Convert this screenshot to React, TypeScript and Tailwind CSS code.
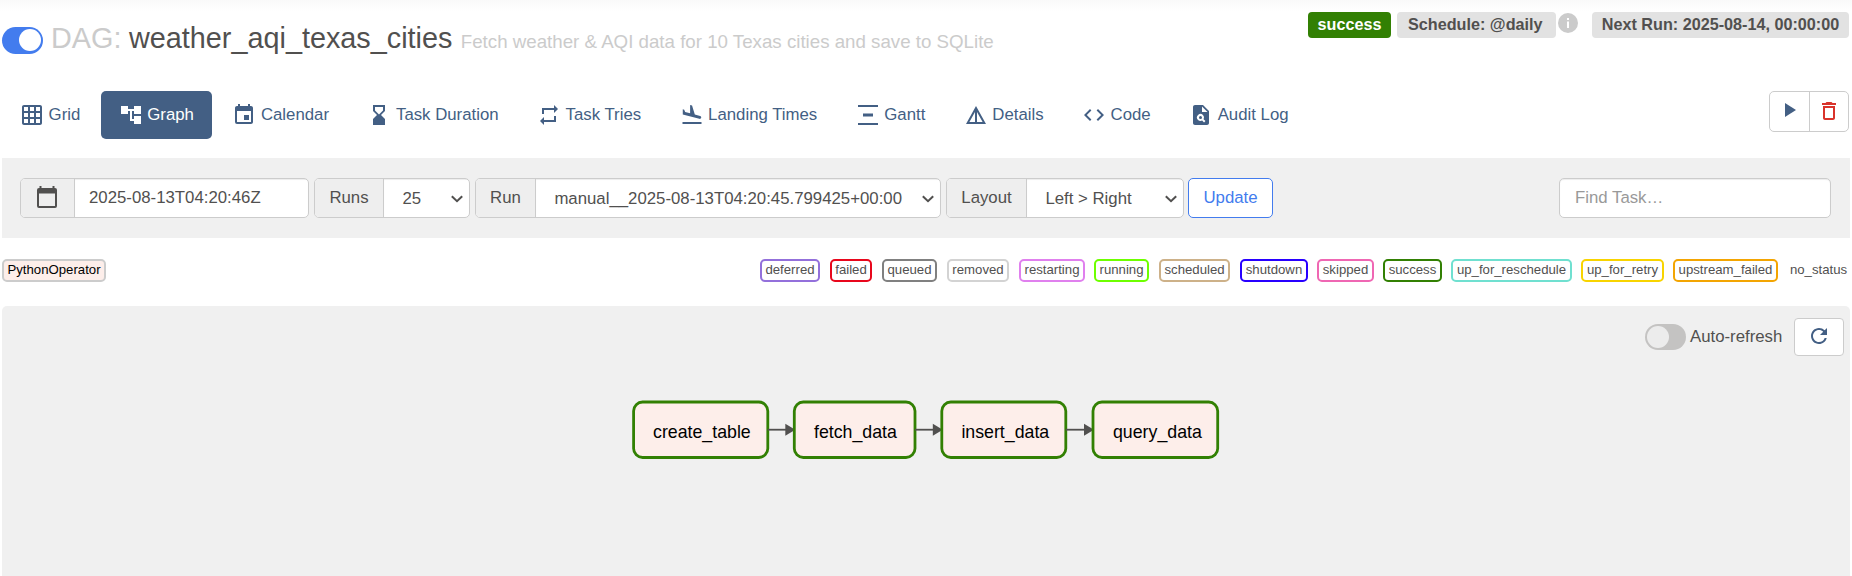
import type { ReactNode } from "react";
import type { IconType } from "react-icons";
import {
  MdAccountTree,
  MdCode,
  MdDeleteOutline,
  MdDetails,
  MdEvent,
  MdFlightLand,
  MdGridOn,
  MdHourglassBottom,
  MdPlagiarism,
  MdPlayArrow,
  MdRefresh,
  MdRepeat,
  MdVerticalDistribute,
} from "react-icons/md";

const tabs: { label: string; icon: IconType; active?: boolean }[] = [
  { label: "Grid", icon: MdGridOn },
  { label: "Graph", icon: MdAccountTree, active: true },
  { label: "Calendar", icon: MdEvent },
  { label: "Task Duration", icon: MdHourglassBottom },
  { label: "Task Tries", icon: MdRepeat },
  { label: "Landing Times", icon: MdFlightLand },
  { label: "Gantt", icon: MdVerticalDistribute },
  { label: "Details", icon: MdDetails },
  { label: "Code", icon: MdCode },
  { label: "Audit Log", icon: MdPlagiarism },
];

const states = [
  { label: "deferred", style: "w-[60px] border-[#9370db]" },
  { label: "failed", style: "w-[42px] border-[#e8071c]" },
  { label: "queued", style: "w-[55px] border-[#808080]" },
  { label: "removed", style: "w-[62px] border-[#d3d3d3]" },
  { label: "restarting", style: "w-[66px] border-[#e080ee]" },
  { label: "running", style: "-ml-px w-[55px] border-[#6eff00]" },
  { label: "scheduled", style: "w-[71px] border-[#cdb189]" },
  { label: "shutdown", style: "w-[68px] border-[#2800ff]" },
  { label: "skipped", style: "-ml-px w-[57px] border-[#ef67b3]" },
  { label: "success", style: "-ml-px w-[59px] border-[#328003]" },
  { label: "up_for_reschedule", style: "-ml-px w-[121px] border-[#70e0d0]" },
  { label: "up_for_retry", style: "-ml-px w-[83px] border-[#f8d400]" },
  { label: "upstream_failed", style: "-ml-px w-[105px] border-[#f3a502]" },
  { label: "no_status", style: "-ml-px w-[63px] border-transparent" },
];

const tasks = [
  { label: "create_table", x: 3.6, width: 134.2, textX: 23 },
  { label: "fetch_data", x: 164.3, width: 120.7, textX: 184 },
  { label: "insert_data", x: 311.8, width: 124, textX: 331.4 },
  { label: "query_data", x: 463, width: 124.7, textX: 483 },
];

function Chevron() {
  return (
    <svg className="h-2 w-3 shrink-0" viewBox="0 0 12 8" fill="none" stroke="#51504f" strokeWidth="2">
      <path d="M.8 1.2 6 6.2l5.2-5" />
    </svg>
  );
}

function Field({ addon, addonStyle, children, style }: { addon: ReactNode; addonStyle: string; children: ReactNode; style: string }) {
  return (
    <div className={`flex h-10 overflow-hidden rounded-[5px] border border-[#ccc] bg-white ${style}`}>
      <div className={`flex shrink-0 items-center justify-center border-r border-[#ccc] bg-[#eee] ${addonStyle}`}>{addon}</div>
      <div className="flex grow items-center justify-between shadow-[inset_0_1px_1px_rgba(0,0,0,0.075)]">{children}</div>
    </div>
  );
}

function SelectValue({ value }: { value: string }) {
  return (
    <span className="flex grow items-center justify-between pt-0.5 pr-1.5 pl-[18.4px]">
      {value}
      <Chevron />
    </span>
  );
}

function Graph() {
  return (
    <svg className="ml-[628px] h-[60px] w-[590px]" viewBox="0 0 590 60">
      {tasks.map(({ label, x, width, textX }, i) => (
        <g key={label}>
          {i > 0 && (
            <>
              <path d={`M${tasks[i - 1].x + tasks[i - 1].width} 29.7H${x - 8}`} stroke="#51504f" strokeWidth="1.8" />
              <path d={`M${x - 9} 23.7l10 6-10 6z`} fill="#51504f" />
            </>
          )}
          <rect x={x} y="2" width={width} height="55.5" rx="9" fill="#fdeeea" stroke="#328003" strokeWidth="2.8" />
          <text x={textX} y="38" fill="#000" className="text-[17.75px]">
            {label}
          </text>
        </g>
      ))}
    </svg>
  );
}

export default function App() {
  return (
    <div className="flex h-[576px] flex-col overflow-hidden bg-white px-0.5 font-['Liberation_Sans',Arial,sans-serif] text-[16.8px] leading-6 text-[#51504f]">
      <header className="-mx-0.5 flex h-[91px] items-start justify-between bg-[linear-gradient(#f9f9f9,#fff_12px)] pr-[3px] pl-0.5">
        <h1 className="flex items-baseline pt-[22px] text-[28.8px] leading-[32px] whitespace-pre">
          <span className="flex h-[27px] w-[41px] items-center justify-end self-center rounded-full bg-[#437cee] pr-0.5">
            <span className="size-[22.5px] rounded-full bg-white" />
          </span>
          <span className="ml-2 text-[#cbcbcb]">DAG: </span>
          <span className="-ml-[0.4px]">weather_aqi_texas_cities</span>
          <span className="ml-[8.4px] text-[18.72px] text-[#cbcbcb]">Fetch weather &amp; AQI data for 10 Texas cities and save to SQLite</span>
        </h1>
        <div className="flex pt-3 text-[16.2px] leading-[25px] font-bold whitespace-pre">
          <span className="h-[26px] w-[83px] rounded-[4px] bg-[#328003] text-center text-white">success</span>
          <span className="ml-1.5 h-[26px] w-[159px] rounded-[4px] bg-[#e2e2e2] pl-[11px]">Schedule: @daily</span>
          <svg className="mt-px ml-0.5 size-5" viewBox="0 0 20 20">
            <circle cx="10" cy="10" r="10" fill="#cbcbcb" />
            <path d="M9 5h2v2H9zM9 8.5h2V15H9z" fill="#fff" />
          </svg>
          <span className="ml-3.5 h-[26px] w-[257px] rounded-[4px] bg-[#e2e2e2] text-center">Next Run: 2025-08-14, 00:00:00</span>
        </div>
      </header>

      <nav className="flex h-[67px] items-start justify-between pr-px">
        <ul className="flex gap-[2.4px]">
          {tabs.map(({ label, icon: Icon, active }) => (
            <li
              key={label}
              className={`flex h-12 items-center gap-[4.6px] rounded-[5px] px-[18px] whitespace-nowrap ${active ? "bg-[#435f84] text-white" : "text-[#435f84]"}`}
            >
              <Icon className="size-6 shrink-0" />
              <span className="-mt-px">{label}</span>
            </li>
          ))}
        </ul>
        <div className="flex h-[41px] w-20 rounded-[5px] border border-[#ccc]">
          <button className="flex w-10 items-center justify-center border-r border-[#ccc] pr-px pb-1 text-[#435f84]">
            <MdPlayArrow className="size-6" />
          </button>
          <button className="flex w-[38px] items-center justify-center pb-0.5 text-[#d9332b]">
            <MdDeleteOutline className="size-6" />
          </button>
        </div>
      </nav>

      <section className="flex h-20 shrink-0 items-center bg-[#f0f0f0] pr-[19px] pl-[18px]">
        <Field
          addonStyle="w-[54px] pr-0.5 pb-0.5"
          style="w-[289px]"
          addon={
            <svg className="size-[22px]" viewBox="0 0 22 22" fill="#51504f">
              <path d="M3.5 0h2v2h11V0h2v2H19a2 2 0 0 1 2 2v16a2 2 0 0 1-2 2H3a2 2 0 0 1-2-2V4a2 2 0 0 1 2-2h.5zM3 7.5V20h16V7.5z" />
            </svg>
          }
        >
          <span className="pl-3.5">2025-08-13T04:20:46Z</span>
        </Field>
        <Field addon="Runs" addonStyle="w-[69px]" style="ml-[5px] w-[156px]">
          <SelectValue value="25" />
        </Field>
        <Field addon="Run" addonStyle="w-[60px]" style="ml-[5px] w-[466px]">
          <SelectValue value="manual__2025-08-13T04:20:45.799425+00:00" />
        </Field>
        <Field addon="Layout" addonStyle="w-[80px]" style="ml-[5px] w-[238px]">
          <SelectValue value="Left > Right" />
        </Field>
        <button className="ml-1 h-10 w-[85px] rounded-[5px] border border-[#437cee] bg-white text-[#437cee]">Update</button>
        <input
          className="ml-auto h-10 w-[272px] rounded-[5px] border border-[#ccc] bg-white px-[15px] shadow-[inset_0_1px_1px_rgba(0,0,0,0.075)] placeholder:text-[#999]"
          placeholder="Find Task…"
        />
      </section>

      <section className="flex h-[68px] shrink-0 items-start justify-between pt-[21px] text-[13.2px] leading-[18px]">
        <span className="h-[23px] w-[104px] rounded-[5px] border-2 border-[#ccc] bg-[#fdeeea] text-center text-black">PythonOperator</span>
        <div className="flex gap-2.5">
          {states.map(({ label, style }) => (
            <span key={label} className={`flex h-[23px] justify-center rounded-[5px] border-2 whitespace-nowrap ${style}`}>
              {label}
            </span>
          ))}
        </div>
      </section>

      <main className="flex grow flex-col rounded-t-[5px] bg-[#f0f0f0]">
        <div className="flex h-[94px] items-start justify-end pt-3 pr-1.5">
          <span className="mt-1.5 flex h-[26px] w-[41px] items-center rounded-full bg-[#c4c3c2] pl-0.5">
            <span className="size-[22px] rounded-full bg-[#ececec]" />
          </span>
          <span className="mt-[7px] ml-1 w-[104px]">Auto-refresh</span>
          <button className="flex h-[38px] w-[50px] items-center justify-center rounded-[4px] border border-[#ccc] bg-white pb-0.5 text-[#435f84]">
            <MdRefresh className="size-6" />
          </button>
        </div>
        <Graph />
      </main>
    </div>
  );
}
